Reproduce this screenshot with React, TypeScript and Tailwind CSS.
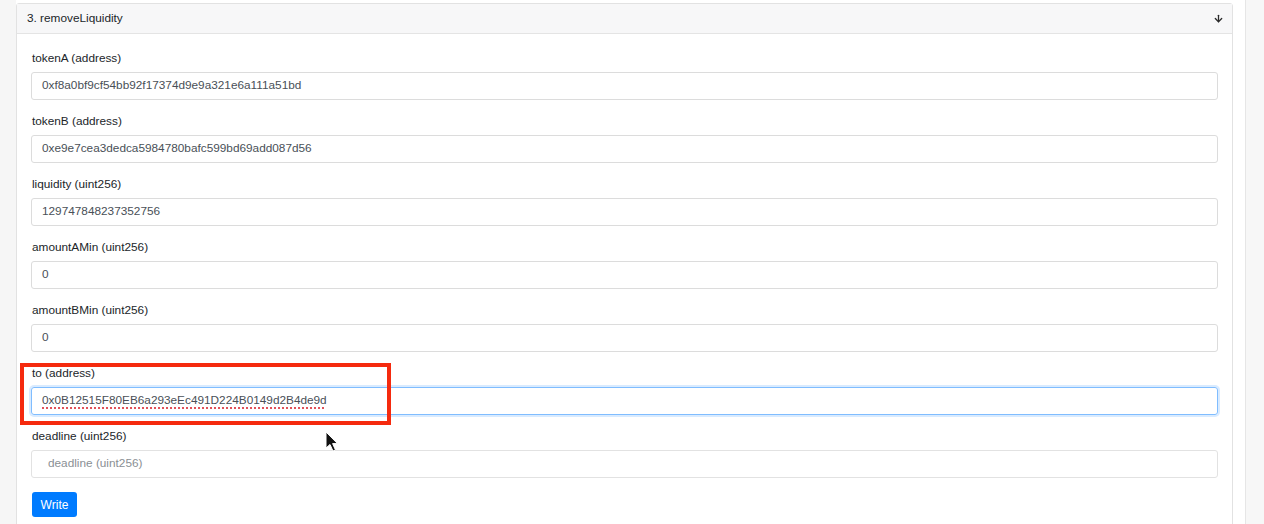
import { ArrowDown } from "lucide-react";

const fields = [
  { label: "tokenA (address)", value: "0xf8a0bf9cf54bb92f17374d9e9a321e6a111a51bd" },
  { label: "tokenB (address)", value: "0xe9e7cea3dedca5984780bafc599bd69add087d56" },
  { label: "liquidity (uint256)", value: "129747848237352756" },
  { label: "amountAMin (uint256)", value: "0" },
  { label: "amountBMin (uint256)", value: "0" },
];

const Field = ({ label, children }: { label: string; children: React.ReactNode }) => (
  <div>
    <div className="h-[16px] leading-[16px] mb-[8px] pl-px pt-[1.5px] text-[#212529]">{label}</div>
    {children}
  </div>
);

const App = () => {
  return (
    <div
      className="relative flex w-[1264px] h-[524px] overflow-hidden bg-white text-[11.8px]"
      style={{ fontFamily: '"Liberation Sans", Arial, sans-serif' }}
    >
      <div className="w-[16px] shrink-0 bg-[#f6f6f6]" />
      <div className="w-[1217px] shrink-0 pt-[3px]">
        <div className="border border-[#e2e2e2] rounded-t-[3px] h-[600px]">
          <div className="h-[30px] flex items-center justify-between pl-[10px] pr-[8px] bg-[#f7f7f8] border-b border-[#e4e4e4] text-[#212529]">
            <span>3. removeLiquidity</span>
            <ArrowDown size={11} strokeWidth={2.8} className="text-[#2a2a2a]" />
          </div>
          <div className="px-[14px] pt-[14px] flex flex-col gap-[11px]">
            {fields.map((f) => (
              <Field key={f.label} label={f.label}>
                <div className="h-[28px] flex items-center pl-[10px] border border-[#dcdcdc] rounded-[3px] text-[#495057]">
                  {f.value}
                </div>
              </Field>
            ))}
            <Field label="to (address)">
              <div className="h-[28px] flex items-center pl-[10px] border border-[#80bdff] rounded-[3px] text-[#495057] shadow-[0_0_0_2px_rgba(0,123,255,0.15)]">
                <span className="underline decoration-dotted decoration-[#e0525a] decoration-[1.5px] underline-offset-[3px]">
                  0x0B12515F80EB6a293eEc491D224B0149d2B4de9d
                </span>
              </div>
            </Field>
            <Field label="deadline (uint256)">
              <div className="h-[28px] flex items-center pl-[16px] border border-[#e2e2e2] rounded-[3px] text-[#8a8f94]">
                deadline (uint256)
              </div>
            </Field>
            <div className="pt-[3px]">
              <button className="h-[25px] w-[45px] bg-[#007bff] text-white rounded-[3px] text-[12px] ml-px">
                Write
              </button>
            </div>
          </div>
        </div>
      </div>
      <div className="w-[12px] shrink-0 bg-white" />
      <div className="flex-1 border-l border-[#e6e6e6] bg-[#f7f7f7]" />

      <div className="absolute left-[20px] top-[363px] w-[371px] h-[62px] border-[4px] border-[#f52a0e] pointer-events-none" />

      <svg className="absolute left-[325px] top-[431px]" width="14" height="22" viewBox="0 0 14 22">
        <path d="M1 1 L1 17 L5 13.5 L8 20 L10.5 19 L7.6 12.6 L12.5 12.6 Z" fill="#111" stroke="#fff" strokeWidth="1" strokeLinejoin="round" />
      </svg>
    </div>
  );
};

export default App;
